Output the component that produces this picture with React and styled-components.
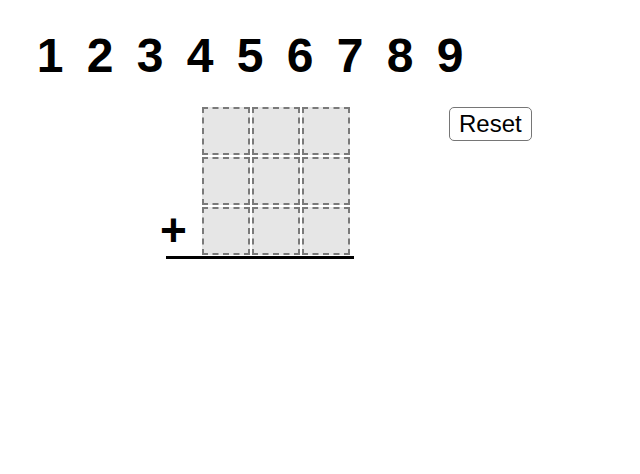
import { Fragment } from 'react';
import styled, { createGlobalStyle } from 'styled-components';

const GlobalStyle = createGlobalStyle`
    body {
        margin: 0;
        background-color: #ffffff;
        font-family: 'Liberation Sans', Arial, sans-serif;
    }
`

const Page = styled.div`
    width: 640px;
    height: 474px;
    display: flex;
    flex-direction: column;
    padding-top: 32px;
    box-sizing: border-box;
`

const DigitRow = styled.div`
    display: flex;
    padding-left: 25px;
`

const Digit = styled.div`
    width: 50px;
    height: 48px;
    font-size: 48px;
    line-height: 48px;
    font-weight: bold;
    text-align: center;
    color: #000000;
    user-select: none;
    cursor: grab;
`

const Workspace = styled.div`
    display: flex;
    align-items: flex-start;
    margin-top: 27px;
    padding-left: 166px;
`

const Sum = styled.div`
    display: grid;
    grid-template-columns: 34px repeat(3, 48px);
    grid-auto-rows: 48px;
    column-gap: 2px;
    row-gap: 2px;
    padding: 0 4px 1px 0;
    border-bottom: 3px solid #000000;
`

/* the sign hangs a little past the left end of the rule */
const Operator = styled.div`
    margin-left: -6px;
    font-size: 46px;
    font-weight: bold;
    line-height: 46px;
    color: #000000;
`

const Slot = styled.div`
    box-sizing: border-box;
    width: 48px;
    height: 48px;
    background-color: #e6e6e6;
    border: 2px dashed #7a7a7a;
`

const ResetButton = styled.button`
    margin-left: 95px;
    height: 34px;
    padding: 0 9px;
    font-family: 'Liberation Sans', Arial, sans-serif;
    font-size: 24px;
    color: #000000;
    background-color: #ffffff;
    border: 1px solid #767676;
    border-radius: 5px;
`

const digits = [1, 2, 3, 4, 5, 6, 7, 8, 9];
const rows = [0, 1, 2];

const App = () => {
  return (
    <Page>
        <GlobalStyle />
        <DigitRow>
            {digits.map((d) => (
                <Digit key={d}>{d}</Digit>
            ))}
        </DigitRow>
        <Workspace>
            <Sum>
                {rows.map((r) => (
                    <Fragment key={r}>
                        <Operator>{r === rows.length - 1 ? '+' : ''}</Operator>
                        <Slot></Slot>
                        <Slot></Slot>
                        <Slot></Slot>
                    </Fragment>
                ))}
            </Sum>
            <ResetButton>Reset</ResetButton>
        </Workspace>
    </Page>
  );
}

export default App;
